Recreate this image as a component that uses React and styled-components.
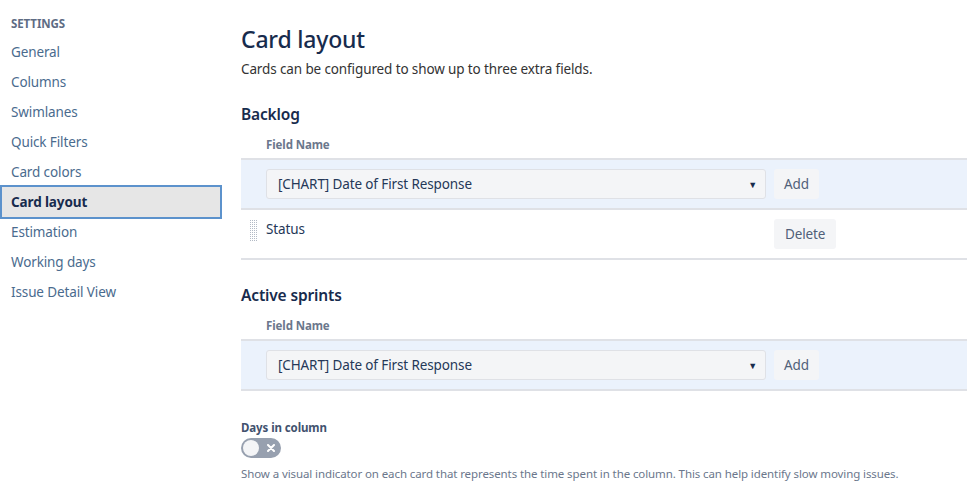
import React, { useState } from 'react';
import styled, { createGlobalStyle } from 'styled-components';

const GlobalStyle = createGlobalStyle`
  body {
    margin: 0;
    background: #fff;
    font-family: "Noto Sans", "Open Sans", sans-serif;
    color: #172b4d;
  }
`;

const Page = styled.div`
  display: flex;
  width: 970px;
  height: 500px;
  overflow: hidden;
`;

const Sidebar = styled.nav`
  width: 222px;
  flex: none;
  padding-top: 16px;
`;

const SideHeading = styled.div`
  font-size: 11.5px;
  line-height: 16px;
  font-weight: 700;
  letter-spacing: -0.1px;
  color: #5e6c84;
  padding-left: 11px;
  margin-bottom: 5px;
`;

const SideItem = styled.div`
  height: 30px;
  line-height: 30px;
  margin: 0 2px;
  padding-left: 9px;
  font-size: 13.5px;
  letter-spacing: -0.12px;
  color: ${p => (p.$active ? '#172b4d' : '#4a6b8e')};
  font-weight: ${p => (p.$active ? 700 : 400)};
  background: ${p => (p.$active ? '#e6e6e6' : 'transparent')};
  outline: ${p => (p.$active ? '2px solid #5c92cc' : 'none')};
  cursor: pointer;
`;

const Main = styled.main`
  margin-left: 19px;
  width: 726px;
  padding-top: 24px;
`;

const Title = styled.h1`
  margin: 0;
  font-size: 23px;
  line-height: 30px;
  font-weight: 500;
  letter-spacing: -0.2px;
  color: #172b4d;
`;

const Lead = styled.p`
  margin: 5px 0 0;
  font-size: 13.5px;
  line-height: 20px;
  letter-spacing: -0.12px;
  color: #333;
`;

const SectionTitle = styled.h2`
  margin: ${p => p.$top}px 0 0;
  font-size: 15.5px;
  line-height: 20px;
  font-weight: 600;
  letter-spacing: -0.15px;
  color: #172b4d;
`;

const ColumnLabel = styled.div`
  margin-top: 13px;
  padding-left: 25px;
  font-size: 11.5px;
  line-height: 16px;
  font-weight: 700;
  letter-spacing: -0.1px;
  color: #6b778c;
`;

const Table = styled.div`
  margin-top: 5px;
  border-top: 2px solid #dfe1e6;
`;

const Row = styled.div`
  display: flex;
  align-items: ${p => (p.$add ? 'center' : 'flex-start')};
  gap: 8px;
  height: 50px;
  padding-left: 25px;
  box-sizing: border-box;
  background: ${p => (p.$add ? '#ebf2fc' : '#fff')};
  border-bottom: 2px solid #dfe1e6;
  position: relative;
`;

const Grip = styled.span`
  position: absolute;
  left: 9px;
  top: 9px;
  width: 8px;
  height: 22px;
  background-color: #b3bac5;
  background-image:
    linear-gradient(90deg, transparent 50%, #fff 50%),
    linear-gradient(0deg, transparent 50%, #fff 50%);
  background-size: 2px 2px;
`;

const SelectBox = styled.div`
  width: 500px;
  height: 30px;
  box-sizing: border-box;
  display: flex;
  align-items: center;
  justify-content: space-between;
  padding: 0 8px 0 11px;
  background: #f4f5f7;
  border: 1px solid #dfe1e6;
  border-radius: 3px;
  font-size: 13.5px;
  letter-spacing: -0.12px;
  color: #253858;
`;

const Caret = styled.span`
  font-size: 9px;
  color: #172b4d;
`;

const FieldText = styled.span`
  width: 500px;
  padding-top: 9px;
  font-size: 13.5px;
  line-height: 20px;
  letter-spacing: -0.12px;
  color: #253858;
`;

const Button = styled.button`
  height: 30px;
  margin-top: ${p => (p.$offset ? '9px' : '0')};
  padding: 0 ${p => (p.$wide ? '11px' : '10px')};
  border: none;
  border-radius: 3px;
  background: #f4f5f7;
  color: #505f79;
  font-family: inherit;
  font-size: 13.5px;
  letter-spacing: -0.12px;
  cursor: pointer;
`;

const OptionLabel = styled.div`
  margin-top: 29px;
  font-size: 11.5px;
  line-height: 16px;
  font-weight: 700;
  letter-spacing: -0.1px;
  color: #42526e;
`;

const Toggle = styled.button`
  display: flex;
  align-items: center;
  justify-content: space-between;
  width: 40px;
  height: 20px;
  margin-top: 2px;
  padding: 0 6px 0 2px;
  border: none;
  border-radius: 10px;
  background: ${p => (p.$on ? '#36b37e' : '#97a0af')};
  cursor: pointer;
`;

const Knob = styled.span`
  width: 16px;
  height: 16px;
  border-radius: 50%;
  background: #f4f5f7;
`;

const Hint = styled.p`
  margin: 8px 0 0;
  font-size: 11.5px;
  line-height: 16px;
  letter-spacing: -0.1px;
  color: #6b778c;
`;

const navItems = [
  'General',
  'Columns',
  'Swimlanes',
  'Quick Filters',
  'Card colors',
  'Card layout',
  'Estimation',
  'Working days',
  'Issue Detail View',
];

const AddRow = () => (
  <Row $add>
    <SelectBox>
      <span>[CHART] Date of First Response</span>
      <Caret>▼</Caret>
    </SelectBox>
    <Button>Add</Button>
  </Row>
);

const App = () => {
  const [active, setActive] = useState('Card layout');
  const [daysOn, setDaysOn] = useState(false);

  return (
    <>
      <GlobalStyle />
      <Page>
        <Sidebar>
          <SideHeading>SETTINGS</SideHeading>
          {navItems.map(item => (
            <SideItem key={item} $active={item === active} onClick={() => setActive(item)}>
              {item}
            </SideItem>
          ))}
        </Sidebar>
        <Main>
          <Title>Card layout</Title>
          <Lead>Cards can be configured to show up to three extra fields.</Lead>

          <SectionTitle $top={25}>Backlog</SectionTitle>
          <ColumnLabel>Field Name</ColumnLabel>
          <Table>
            <AddRow />
            <Row>
              <Grip />
              <FieldText>Status</FieldText>
              <Button $offset $wide>Delete</Button>
            </Row>
          </Table>

          <SectionTitle $top={25}>Active sprints</SectionTitle>
          <ColumnLabel>Field Name</ColumnLabel>
          <Table>
            <AddRow />
          </Table>

          <OptionLabel>Days in column</OptionLabel>
          <Toggle $on={daysOn} onClick={() => setDaysOn(!daysOn)}>
            <Knob />
            <svg width="8" height="8" viewBox="0 0 8 8">
              <path d="M1 1 L7 7 M7 1 L1 7" stroke="#fff" strokeWidth="2" strokeLinecap="round" />
            </svg>
          </Toggle>
          <Hint>
            Show a visual indicator on each card that represents the time spent in the column. This can help identify slow moving issues.
          </Hint>
        </Main>
      </Page>
    </>
  );
};

export default App;
